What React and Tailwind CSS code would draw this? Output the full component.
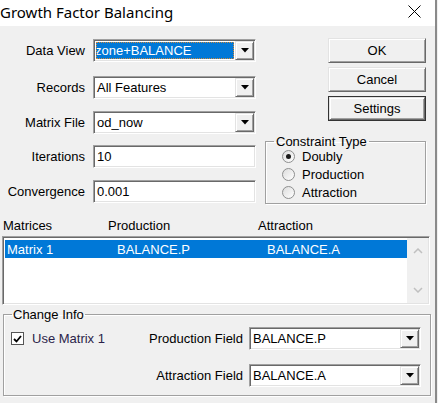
const sunken = 'border border-[#a0a0a0] border-r-white border-b-white shadow-[inset_1px_1px_0_#696969,inset_-1px_-1px_0_#e3e3e3]';
const raised = 'border border-[#e3e3e3] border-r-[#696969] border-b-[#696969] shadow-[inset_1px_1px_0_white,inset_-1px_-1px_0_#a0a0a0]';

function DropBtn() {
  return (
    <div className={`w-[19px] bg-[#f0f0f0] flex items-center justify-center ${raised}`}>
      <svg width="8" height="5" viewBox="0 0 8 5">
        <polygon points="0,0 8,0 4,4.5" fill="#000" />
      </svg>
    </div>
  );
}

function Combo({ value, selected }) {
  return (
    <div className={`h-full flex items-stretch bg-white p-[1px] ${sunken}`}>
      <div className="flex-1 flex items-stretch overflow-hidden pl-[1px] pr-[1px] py-[1px]">
        {selected ? (
          <div className="flex-1 flex items-center bg-[#0078d7] text-white border border-dotted border-[#d08a3a] overflow-hidden">
            <span className="-ml-[2px] whitespace-nowrap">{value}</span>
          </div>
        ) : (
          <div className="flex-1 flex items-center pl-[1px]">
            <span className="whitespace-nowrap">{value}</span>
          </div>
        )}
      </div>
      <DropBtn />
    </div>
  );
}

function TextBox({ value }) {
  return (
    <div className={`h-full flex items-center bg-white pl-[3px] ${sunken}`}>
      {value}
    </div>
  );
}

function Field({ label, children, className }) {
  return (
    <div className={`flex items-stretch h-[23px] ${className}`}>
      <div className="w-[85px] flex items-center justify-end whitespace-nowrap">{label}</div>
      <div className="w-[163px] ml-[8px]">{children}</div>
    </div>
  );
}

function Button({ children, isDefault }) {
  if (isDefault) {
    return (
      <div className="w-[98px] h-[25px] border border-[#333] flex">
        <div className={`flex-1 flex items-center justify-center bg-[#f0f0f0] ${raised}`}>{children}</div>
      </div>
    );
  }
  return (
    <div className={`w-[98px] h-[25px] flex items-center justify-center bg-[#f0f0f0] ${raised}`}>{children}</div>
  );
}

function Radio({ label, checked }) {
  return (
    <div className="h-[18px] flex items-center">
      <div className="w-[13px] h-[13px] rounded-full border border-[#8e8f8f] bg-gradient-to-br from-[#dcdcdc] to-white flex items-center justify-center">
        {checked && <div className="w-[5px] h-[5px] rounded-full bg-[#1a1a1a]" />}
      </div>
      <span className="ml-[7px]">{label}</span>
    </div>
  );
}

export default function App() {
  return (
    <div className="w-[438px] h-[403px] flex bg-[#f0f0f0] font-['Liberation_Sans',Arial,sans-serif] text-[13px] text-black leading-[15px]">
      <div className="w-[435px] flex flex-col">
        {/* title bar */}
        <div className="h-[26px] bg-white flex items-center justify-between">
          <span className="font-['Noto_Sans',sans-serif] text-[15px] leading-[20px] -mt-[3px]">Growth Factor Balancing</span>
          <svg width="13" height="13" viewBox="0 0 13 13" className="mr-[14px] -mt-[3px]">
            <path d="M0.5 0.5 L12.5 12.5 M12.5 0.5 L0.5 12.5" stroke="#000" strokeWidth="1" fill="none" />
          </svg>
        </div>

        <div className="flex-1 flex flex-col">
          {/* top */}
          <div className="flex">
            <div className="flex flex-col w-[256px] pt-[13px]">
              <Field label="Data View"><Combo value="zone+BALANCE" selected /></Field>
              <Field label="Records" className="mt-[14px]"><Combo value="All Features" /></Field>
              <Field label="Matrix File" className="mt-[12px]"><Combo value="od_now" /></Field>
              <Field label="Iterations" className="mt-[11px]"><TextBox value="10" /></Field>
              <Field label="Convergence" className="mt-[12px]"><TextBox value="0.001" /></Field>
            </div>
            <div className="flex flex-col w-[161px] ml-[9px] pt-[12px]">
              <div className="flex flex-col items-end gap-[4px]">
                <Button>OK</Button>
                <Button>Cancel</Button>
                <Button isDefault>Settings</Button>
              </div>
              <fieldset className="mt-[13px] border border-[#a0a0a0] shadow-[inset_1px_1px_0_white,1px_1px_0_white] pb-[2px]">
                <legend className="ml-[8px] px-[2px] -mb-[2px]">Constraint Type</legend>
                <div className="pl-[16px]">
                  <Radio label="Doubly" checked />
                  <Radio label="Production" />
                  <Radio label="Attraction" />
                </div>
              </fieldset>
            </div>
          </div>

          {/* list headers */}
          <div className="flex mt-[14px] h-[15px] pl-[3px]">
            <span className="w-[105px]">Matrices</span>
            <span className="w-[150px]">Production</span>
            <span>Attraction</span>
          </div>

          {/* list */}
          <div className={`ml-[2px] mt-[3px] w-[428px] h-[69px] bg-white flex p-[1px] ${sunken}`}>
            <div className="flex-1 pt-[2px] pl-[1px]">
              <div className="h-[18px] bg-[#0078d7] text-white flex items-center">
                <span className="w-[112px] pl-[2px]">Matrix 1</span>
                <span className="w-[150px]">BALANCE.P</span>
                <span>BALANCE.A</span>
              </div>
            </div>
            <div className="w-[21px] bg-[#f0f0f0] flex flex-col items-center justify-between py-[10px]">
              <svg width="10" height="6" viewBox="0 0 10 6"><polyline points="1,5 5,1 9,5" fill="none" stroke="#c0c0c0" strokeWidth="1.5" /></svg>
              <svg width="10" height="6" viewBox="0 0 10 6"><polyline points="1,1 5,5 9,1" fill="none" stroke="#c0c0c0" strokeWidth="1.5" /></svg>
            </div>
          </div>

          {/* change info */}
          <fieldset className="ml-[3px] mt-[2px] w-[428px] border border-[#a0a0a0] shadow-[inset_1px_1px_0_white,1px_1px_0_white] pt-[5px] pb-[8px]">
            <legend className="ml-[8px] px-[1px]">Change Info</legend>
            <div className="pl-[7px] pr-[9px]">
              <div className="flex items-stretch h-[23px]">
                <div className="w-[120px] flex items-center">
                  <div className="w-[13px] h-[13px] border border-[#555] bg-white flex items-center justify-center">
                    <svg width="9" height="8" viewBox="0 0 9 8"><polyline points="1,4 3.5,6.5 8,1" fill="none" stroke="#000" strokeWidth="1.8" /></svg>
                  </div>
                  <span className="ml-[8px] text-[#2b1f4a]">Use Matrix 1</span>
                </div>
                <div className="flex-1 flex items-center justify-end whitespace-nowrap">Production Field</div>
                <div className="w-[172px] ml-[6px]"><Combo value="BALANCE.P" /></div>
              </div>
              <div className="flex items-stretch h-[23px] mt-[14px]">
                <div className="flex-1 flex items-center justify-end whitespace-nowrap">Attraction Field</div>
                <div className="w-[172px] ml-[6px]"><Combo value="BALANCE.A" /></div>
              </div>
            </div>
          </fieldset>
        </div>
      </div>
      <div className="w-[2px] bg-[#8a8a8a]" />
      <div className="w-[1px] bg-[#f0f0f0]" />
    </div>
  );
}
